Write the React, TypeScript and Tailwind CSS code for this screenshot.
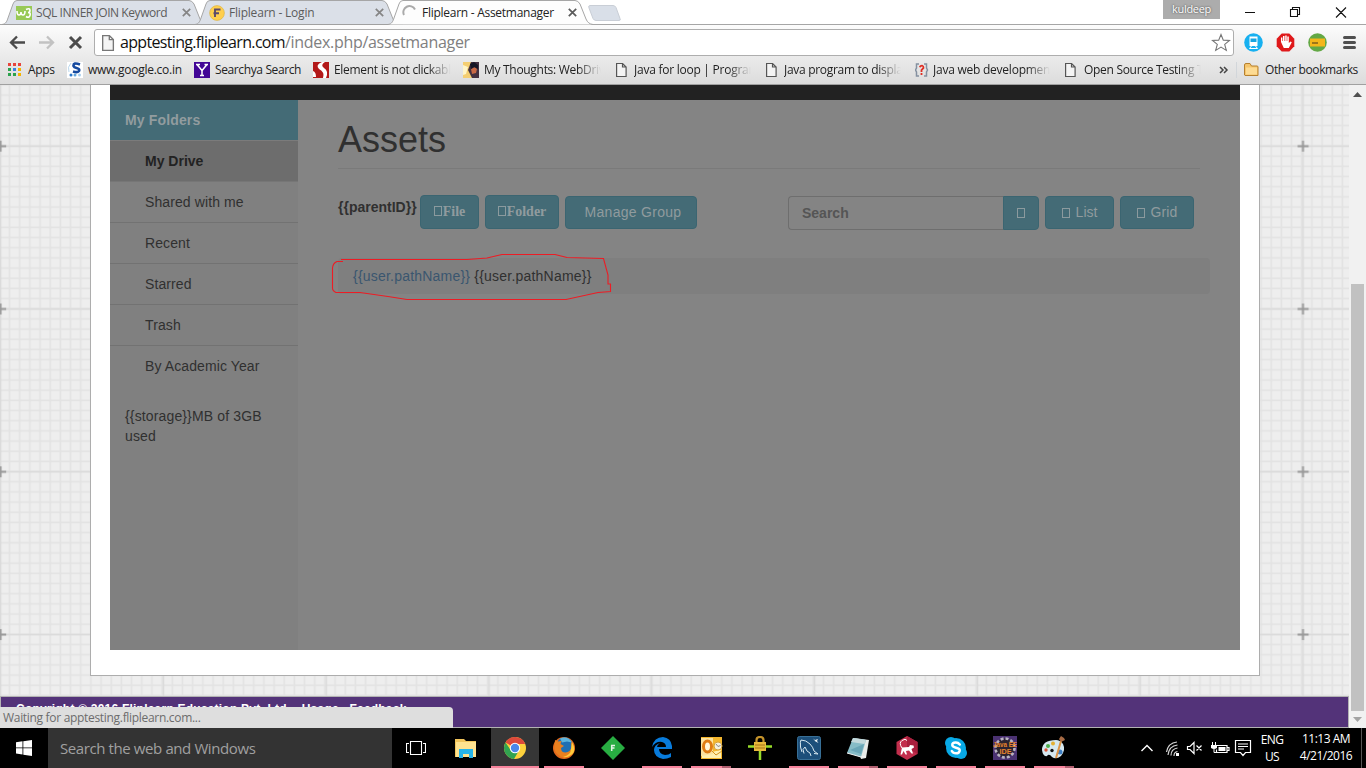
import type { ReactNode } from "react";

const segoe = "font-['Open_Sans','Noto_Sans',sans-serif]";

function PageIcon({ className = "" }: { className?: string }) {
  return (
    <svg width="16" height="16" viewBox="0 0 16 16" className={className}>
      <path d="M.6 1.5h6l3.500 3.500v9.500H.6z M6.500 1.500v3.500h3.500" fill="#f4f4f4" stroke="currentColor" strokeWidth="1.2" />
    </svg>
  );
}

function Tab({ icon, title, active = false }: { icon: ReactNode; title: ReactNode; active?: boolean }) {
  return (
    <div className={`relative w-[193px] h-[25px] shrink-0 ${active ? "z-20" : ""}`}>
      <svg className="absolute left-0 top-0" width="208" height="25" viewBox="0 0 208 25">
        <path
          d="M0 24.5C4 24 5 21 6 18L11 4Q12 .5 15 .5H187Q190 .5 192 4L198 19Q200 24 205 24.5"
          fill={active ? "#fdfdfd" : "#dbe0e8"}
          stroke="#a6a6a6"
        />
        {!active && <path d="M0 24.5H208" stroke="#a0a0a0" />}
      </svg>
      <div className="relative flex items-center h-[25px] pl-[14px]">
        <span className="w-[20px] shrink-0">{icon}</span>
        {title}
        <svg width="9" height="9" viewBox="0 0 9 9" className="absolute left-[180px] top-[8px]">
          <path d="M.8.8l7.4 7.4M8.2.8L.8 8.2" stroke={active ? "#5a5a5a" : "#858585"} strokeWidth="1.7" />
        </svg>
      </div>
    </div>
  );
}

function Bookmark({ icon, width, children }: { icon: ReactNode; width: string; children: ReactNode }) {
  return (
    <div className={`flex items-center shrink-0 h-full ${width}`}>
      {icon}
      {children}
    </div>
  );
}

function Fade({ children, className }: { children: ReactNode; className: string }) {
  return (
    <span
      className={`block w-[117px] overflow-hidden whitespace-nowrap [mask-image:linear-gradient(to_right,black_80%,transparent)] ${className}`}
    >
      {children}
    </span>
  );
}

function Browser() {
  return (
    <div className={`h-[85px] shrink-0 bg-white text-[12px] text-[#222] ${segoe}`}>
      <div className="relative flex h-[25px] pl-[2px]">
        <div className="absolute left-0 right-0 bottom-0 h-px bg-[#a6a6a6]" />
        <Tab
          icon={
            <svg width="16" height="14" viewBox="0 0 16 14">
              <path d="M0 0h16v14H0z" fill="#98c956" />
              <path d="M1 5q0 4 2 4t2-3q0 3 2 3t2-4M10 3.5q4-2 4 1 0 2-2 2 3 0 2 3t-4 1" fill="none" stroke="#fff" strokeWidth="1.6" />
            </svg>
          }
          title={<span className="text-[#5c5c5c] whitespace-nowrap tracking-[-0.44px]">SQL INNER JOIN Keyword</span>}
        />
        <Tab
          icon={
            <svg width="16" height="16" viewBox="0 0 16 16">
              <circle cx="8" cy="8" r="7.4" fill="#ffcf4d" stroke="#d9b040" strokeWidth=".6" />
              <path d="M6 12V4.5h5.500M4.500 8.300h5.500" fill="none" stroke="#5c4a6b" strokeWidth="1.900" />
            </svg>
          }
          title={<span className="text-[#5c5c5c] whitespace-nowrap tracking-[-0.2px]">Fliplearn - Login</span>}
        />
        <Tab
          active
          icon={
            <svg width="16" height="16" viewBox="0 0 16 16">
              <path d="M2 10A6 6 0 0 1 13 4.500" fill="none" stroke="#aaa" strokeWidth="2" />
            </svg>
          }
          title={<span className="text-[#222] whitespace-nowrap tracking-[-0.27px]">Fliplearn - Assetmanager</span>}
        />
        <svg width="34" height="17" viewBox="0 0 34 17" className="ml-[6px] mt-[5px]">
          <path d="M3 .5h23q2 0 3 2l4 11q1 2-1 2H9q-2 0-3-2L2 3Q1 .5 3 .5z" fill="#d9dfe8" stroke="#c9ced6" />
        </svg>
        <div className="ml-auto flex">
          <div className="w-[57px] h-[19px] bg-[#acacac] text-white text-[11px] leading-[18px] text-center tracking-[-0.3px] [text-shadow:0_0_2px_#333]">kuldeep</div>
          <svg width="146" height="24" viewBox="0 0 146 24">
            <path d="M25 12.500h10M70.500 9.500h7v7h-7zM72.500 9v-1.500h7v7H78M116 7.500l10 10m0-10l-10 10" fill="none" stroke="#111" strokeWidth="1.100" />
          </svg>
        </div>
      </div>
      <div className="h-[60px] bg-linear-to-b from-[#fcfcfc] to-[#dcdcdc] border-b border-[#a0a0a0]">
        <div className="h-[32px] pt-[4px] flex">
          <svg width="94" height="28" viewBox="0 0 94 28" className="shrink-0">
            <path d="M25 13.500H11.500M17 7.500l-6 6 6 6" fill="none" stroke="#4b4b4b" strokeWidth="2.300" />
            <path d="M39 13.500H52.500M47 7.500l6 6-6 6" fill="none" stroke="#c2c2c2" strokeWidth="2.300" />
            <path d="M70 8l11 11M81 8L70 19" stroke="#4b4b4b" strokeWidth="3" />
          </svg>
          <div className="w-[1140px] h-[27px] shrink-0 rounded-[3px] border border-[#aeaeae] bg-white flex items-center pl-[7px]">
            <PageIcon className="text-[#777] w-[18px] h-[18px] shrink-0" />
            <span className="text-[16px] leading-[22px] text-[#111] tracking-[-0.67px] -mt-px">
              apptesting.fliplearn.com<span className="text-[#808080] tracking-[-0.3px]">/index.php/assetmanager</span>
            </span>
            <svg width="20" height="20" viewBox="0 0 20 20" className="ml-auto mr-[2px]">
              <path d="M10 1.500l2.300 5.600 6.200.4-4.800 3.900 1.600 6-5.300-3.300-5.300 3.300 1.600-6L1.500 7.500l6.200-.4z" fill="#fff" stroke="#777" strokeWidth="1.100" />
            </svg>
          </div>
          <svg width="132" height="28" viewBox="48 0 132 28" className="shrink-0">
            <circle cx="67.500" cy="13.500" r="9.300" fill="#17b0f0" />
            <path d="M63.500 7.500h8v9.500h-8z" fill="#fff" />
            <path d="M64.500 9.500h6v3.500h-6z" fill="#17a5e0" />
            <path d="M65.500 17l-2 2.500h8l-2-2.500" fill="none" stroke="#fff" />
            <path d="M95.700 4.500h7.600l5 5.200v7.600l-5 5.200h-7.600l-5-5.200V9.700z" fill="#df191b" />
            <path d="M95 13V8.500h1.400V12h.6V7h1.500v5h.7V6.500h1.500V12h.6V7.500h1.500V14l1.700-1.500 1.300.8-3 5.700h-5z" fill="#fff" />
            <circle cx="131.500" cy="13.500" r="9.300" fill="#63a845" />
            <path d="M124 9.500h15v8h-15z" fill="#f3b61b" />
            <path d="M126 14h6" stroke="#80601a" strokeWidth="1.500" />
            <path d="M158.500 8.500h10M158.500 13.500h10M158.500 18.500h10" stroke="#505050" strokeWidth="3" strokeLinecap="round" />
          </svg>
        </div>
        <div className="h-[26px] flex items-center pl-[8px]">
          <Bookmark
            width="w-[59px] tracking-[-0.3px]"
            icon={
              <svg width="20" height="14" viewBox="0 0 20 14" className="shrink-0">
                <path d="M0 0h3v3H0zM5 0h3v3H5zM10 0h3v3h-3z" fill="#e8453c" />
                <path d="M0 5h3v3H0zM0 10h3v3H0z" fill="#2ba24c" />
                <path d="M5 5h3v3H5z" fill="#3b82e0" />
                <path d="M5 10h3v3H5z" fill="#2ba24c" />
                <path d="M10 5h3v3h-3zM10 10h3v3h-3z" fill="#f5b400" />
              </svg>
            }
          >
            Apps
          </Bookmark>
          <Bookmark
            width="w-[127px] tracking-[-0.26px]"
            icon={
              <svg width="21" height="16" viewBox="0 0 21 16" className="shrink-0">
                <path d="M0 0h16v16H0z" fill="#fff" />
                <path d="M13 2.500Q6 0 6.500 4q.5 1.500 3 2 3.500.8 2.500 3-1.500 2-6 .5" fill="none" stroke="#164a9f" strokeWidth="2.600" />
                <circle cx="4" cy="13" r="1.500" fill="#2a78cc" /><circle cx="8" cy="13" r="1.500" fill="#64a6dc" /><circle cx="12.500" cy="13" r="1.500" fill="#a9cfec" />
                <path d="M4 1Q0 5 2 10" fill="none" stroke="#b8d6ec" />
              </svg>
            }
          >
            www.google.co.in
          </Bookmark>
          <Bookmark
            width="w-[119px] tracking-[-0.38px]"
            icon={
              <svg width="21" height="16" viewBox="0 0 21 16" className="shrink-0">
                <path d="M0 0h16v16H0z" fill="#420696" />
                <path d="M3 2.500l5 6 5-6M8 8v6M2 2.500h4M10.500 2.500H14M6 13.500h4" fill="none" stroke="#fff" strokeWidth="1.500" />
              </svg>
            }
          >
            Searchya Search
          </Bookmark>
          <Bookmark
            width="w-[150px]"
            icon={
              <svg width="21" height="16" viewBox="0 0 21 16" className="shrink-0">
                <path d="M0 0h16v16H0z" fill="#b31919" />
                <path d="M9 0Q2 3 6 7q6 3 4 9h3Q16 9 11 6 7 3 12 0zM0 9q3 1 3 6H0z" fill="#fff" />
              </svg>
            }
          >
            <Fade className="tracking-[-0.3px]">Element is not clickable</Fade>
          </Bookmark>
          <Bookmark
            width="w-[153px]"
            icon={
              <svg width="21" height="16" viewBox="0 0 21 16" className="shrink-0">
                <path d="M0 0h16v16H0z" fill="#433040" />
                <path d="M0 0h8L5 8l4 8H0z" fill="#f4ce72" />
                <path d="M0 3l5 2-2 7-3 1z" fill="#fff5c9" />
                <path d="M8 7l4-2 2 2-1 4-4 1z" fill="#c96845" />
                <path d="M7 2l4-2 4 3v4l-4-2-3 2z" fill="#151626" />
              </svg>
            }
          >
            <Fade className="tracking-[-0.3px]">My Thoughts: WebDriver</Fade>
          </Bookmark>
          <Bookmark width="w-[150px]" icon={<PageIcon className="text-[#555] mr-[2px] shrink-0" />}>
            <Fade className="tracking-[-0.25px]">Java for loop | Programs</Fade>
          </Bookmark>
          <Bookmark width="w-[149px]" icon={<PageIcon className="text-[#555] mr-[2px] shrink-0" />}>
            <Fade className="tracking-[-0.3px]">Java program to display</Fade>
          </Bookmark>
          <Bookmark
            width="w-[150px]"
            icon={
              <svg width="18" height="16" viewBox="0 0 18 16" className="shrink-0">
                <path d="M4 2H1.500v4L.5 8l1 2v4H4M9 2h2.500v4l1 2-1 2v4H9" fill="none" stroke="#8490a0" strokeWidth="1.500" />
                <path d="M4.500 5Q8.500 2 8.500 6L6.500 8v2M6.500 11v2" fill="none" stroke="#df2e24" strokeWidth="1.800" />
              </svg>
            }
          >
            <Fade className="tracking-[-0.24px]">Java web development</Fade>
          </Bookmark>
          <Bookmark width="w-[154px]" icon={<PageIcon className="text-[#555] mr-[3px] shrink-0" />}>
            <Fade className="tracking-[-0.3px]">Open Source Testing Tools</Fade>
          </Bookmark>
          <svg width="25" height="16" viewBox="0 0 25 16" className="shrink-0">
            <path d="M1 5l3 3-3 3M5 5l3 3-3 3" fill="none" stroke="#444" strokeWidth="1.500" />
            <path d="M17.500 0v16" stroke="#d2d6da" />
          </svg>
          <svg width="21" height="16" viewBox="0 0 21 16" className="shrink-0">
            <path d="M.5 13V3q0-1.500 1.500-1.500h4L7.500 4H13q1 0 1 1v8.500H1z" fill="#f5c56c" stroke="#b6802e" />
            <path d="M2 5.500h11v7H2z" fill="#fddb93" />
          </svg>
          <span className="whitespace-nowrap tracking-[-0.37px]">Other bookmarks</span>
        </div>
      </div>
    </div>
  );
}

function Backdrop() {
  return (
    <svg className="absolute inset-0 w-full h-full" aria-hidden="true">
      <defs>
        <pattern id="cells" width="10.175" height="10.175" patternUnits="userSpaceOnUse" x="4.500" y="56">
          <path d="M0 5h10.175M5 0v10.175" stroke="#e3e3e3" strokeWidth="1.700" />
        </pattern>
        <pattern id="major" width="162.800" height="162.800" patternUnits="userSpaceOnUse" x="-80.800" y="-20.200">
          <path d="M0 81.400h162.800M81.400 0v162.800" stroke="#dadada" strokeWidth="1.600" />
          <path d="M76 81.400h11M81.400 76v11" stroke="#999" strokeWidth="2" />
        </pattern>
      </defs>
      <path d="M0 0h1349v643H0z" fill="#eee" />
      <path d="M0 0h1349v643H0z" fill="url(#cells)" />
      <path d="M0 0h1349v643H0z" fill="url(#major)" />
    </svg>
  );
}

function Missing() {
  return <span className="inline-block w-[8px] h-[10px] border border-[#8b9a9e]" />;
}

function Button({ className, children }: { className: string; children: ReactNode }) {
  return (
    <button className={`flex items-center justify-center shrink-0 bg-[#446b76] border border-[#3b6571] text-[#909b9e] ${className}`}>
      {children}
    </button>
  );
}

const folders = ["Shared with me", "Recent", "Starred", "Trash", "By Academic Year"];

function Sidebar() {
  return (
    <aside className="w-[188px] shrink-0 bg-[#808080] text-[#303030]">
      <div className="h-[40px] pl-[15px] bg-[#446b76] text-[#929c9f] font-bold leading-[40px] tracking-[0.15px]">My Folders</div>
      <div className="h-[42px] pl-[35px] bg-[#6d6d6d] border-y border-t-[#7b7b7b] border-b-[#767676] text-[#222] font-bold leading-[40px]">My Drive</div>
      {folders.map((name, i) => (
        <div key={name} className={`pl-[35px] leading-[40px] tracking-[0.1px] ${i < folders.length - 1 ? "h-[41px] border-b border-[#727272]" : "h-[40px]"}`}>
          {name}
        </div>
      ))}
      <p className="mt-[20px] pl-[15px] w-[170px] leading-[20px] tracking-[0.14px]">{"{{storage}}MB of 3GB used"}</p>
    </aside>
  );
}

function Assets() {
  return (
    <main className="relative flex-1 pl-[40px] pr-[40px] bg-[#848484] text-[#303030]">
      <h1 className="h-[69px] border-b border-[#7a7a7a] pt-[20px] text-[36px] leading-[40px]">Assets</h1>
      <div className="flex items-start mt-[26px] pr-[6px] h-[63px]">
        <b className="w-[82px] shrink-0 leading-[20px] pt-[2px]">{"{{parentID}}"}</b>
        <Button className="w-[59px] h-[34px] rounded-[4px] font-['Liberation_Serif',serif] font-bold gap-[1px] pb-[2px]"><Missing />File</Button>
        <Button className="w-[74px] h-[34px] rounded-[4px] ml-[6px] font-['Liberation_Serif',serif] font-bold gap-[1px] pb-[2px]"><Missing />Folder</Button>
        <Button className="w-[132px] h-[33px] rounded-[4px] ml-[6px] mt-px pl-[4px] tracking-[0.28px]">Manage Group</Button>
        <div className="ml-auto mt-px w-[215px] h-[34px] shrink-0 rounded-l-[4px] border border-r-0 border-[#6e6e6e] pl-[13px] leading-[33px] font-bold text-[#555]">Search</div>
        <Button className="w-[36px] h-[34px] mt-px rounded-r-[4px]"><Missing /></Button>
        <Button className="w-[69px] h-[33px] mt-px rounded-[4px] ml-[6px] gap-[6px]"><Missing />List</Button>
        <Button className="w-[74px] h-[33px] mt-px rounded-[4px] ml-[6px] gap-[6px] tracking-[0.1px]"><Missing />Grid</Button>
      </div>
      <div className="h-[36px] -mr-[10px] rounded-[4px] bg-[#7f7f7f] pl-[15px] leading-[36px] tracking-[0.21px]">
        <span className="text-[#3a566f]">{"{{user.pathName}}"}</span> {"{{user.pathName}}"}
      </div>
      <svg className="absolute left-[32px] top-[150px]" width="284" height="54" viewBox="330 250 284 54">
        <path
          d="M341 259.500H467L487 258 502 254.500H555L567 257.500 603.500 258.500 608 275V284H610.500V291.500L598 292.500 566 299.500H407L388 296.500 360 292.500H336Q332.500 291 332.500 288V268Q333 263 337 261.500H343"
          fill="none"
          stroke="#ed1c24"
          strokeWidth="1.100"
        />
      </svg>
    </main>
  );
}

function Page() {
  return (
    <div className="relative flex h-[643px] shrink-0 overflow-hidden font-['Liberation_Sans',sans-serif] text-[14px]">
      <Backdrop />
      <div className="relative flex flex-col flex-1">
        <div className="w-[1170px] h-[591px] ml-[90px] shrink-0 bg-white border border-t-0 border-[#adadad] px-[19px]">
          <div className="h-[15px] bg-[#222]" />
          <div className="h-[550px] flex">
            <Sidebar />
            <Assets />
          </div>
        </div>
        <footer className="mt-[20px] h-[32px] shrink-0 bg-[#533379] border border-[#b3b3b3] text-white font-bold text-[12px] leading-[16px] pl-[15px] pt-[4px] tracking-[0.22px] whitespace-nowrap">
          Copyright © 2016 Fliplearn Education Pvt. Ltd. - Usage . Feedback
        </footer>
        <div className={`absolute left-0 bottom-0 w-[453px] h-[21px] rounded-tr-[4px] bg-[#dedede] pl-[3px] text-[12px] leading-[22px] text-[#6c6c6c] tracking-[-0.31px] ${segoe}`}>
          Waiting for apptesting.fliplearn.com...
        </div>
      </div>
      <div className="relative w-[17px] shrink-0 bg-[#f1f1f1] flex flex-col items-center">
        <svg width="9" height="5" viewBox="0 0 9 5" className="mt-[7px] shrink-0"><path d="M0 5l4.500-5L9 5z" fill="#505050" /></svg>
        <div className="mt-[187px] h-[427px] w-[13px] bg-[#c1c1c1] shrink-0" />
        <svg width="9" height="5" viewBox="0 0 9 5" className="mt-[6px] shrink-0"><path d="M0 0l4.500 5L9 0z" fill="#a3a3a3" /></svg>
      </div>
    </div>
  );
}

function Explorer() {
  return (
    <svg width="24" height="24" viewBox="0 0 24 24">
      <path d="M1 3h9l2 2h10v16H1z" fill="#f2c55c" /><path d="M2 6h20v15H2z" fill="#ffe390" />
      <path d="M5 13h14v9h-4v-4H9v4H5z" fill="#27b4e8" />
    </svg>
  );
}

function Chrome() {
  return (
    <svg width="24" height="24" viewBox="0 0 24 24">
      <circle cx="12" cy="12" r="11" fill="#fdd13c" />
      <path d="M12 12L2.500 6.500A11 11 0 0 1 22.200 8H12z" fill="#dc493b" />
      <path d="M2.500 6.500A11 11 0 0 0 11 23l5-8.500-4 2-4-2z" fill="#31a350" />
      <circle cx="12" cy="12" r="5.200" fill="#fff" /><circle cx="12" cy="12" r="4.200" fill="#4b87e8" />
    </svg>
  );
}

function Firefox() {
  return (
    <svg width="24" height="24" viewBox="0 0 24 24">
      <circle cx="12" cy="12" r="11" fill="#e46a1c" />
      <circle cx="12.500" cy="9.500" r="8" fill="#1f6fb4" />
      <path d="M8 2.500q8-3 12 4l-5-1-5 1z" fill="#5cb4dd" />
      <path d="M3 4l3 1.500 3.500-.5-1 3 3.500 2-3 2q0 4.500 4.500 4.500 5-.5 6-5.500l-.5-5 2.500 2.500q2 7-2 10.500-5 4-11 1.500-7-4-6-11z" fill="#e9801f" />
      <path d="M20 6q5 9-1 13-4 3-8 2 8-2 8-8z" fill="#ffca3b" />
    </svg>
  );
}

function Diamond() {
  return (
    <svg width="24" height="24" viewBox="0 0 24 24">
      <path d="M12 0l12 12-12 12L0 12z" fill="#28ad42" /><path d="M10.700 15V9.500H14M11 12h2.500" fill="none" stroke="#e5f4e7" strokeWidth="1.500" />
    </svg>
  );
}

function Edge() {
  return (
    <svg width="24" height="24" viewBox="0 0 24 24">
      <path d="M2 11Q4 1 13 1q8 1 9 9v3H9q0 5 6 6 4 0 6-2v4q-4 2-8 2-9-2-9-9 0-5 6-7-3 2-3 4h9q0-4-4-5-6-1-10 5z" fill="#087bdc" />
    </svg>
  );
}

function Outlook() {
  return (
    <svg width="24" height="24" viewBox="0 0 24 24">
      <path d="M2 1h21v22H2z" fill="#f4b72f" /><path d="M3 18l19-4v8H3z" fill="#fff0b0" />
      <path d="M2 2h12v16L2 20z" fill="#fbe3a0" />
      <ellipse cx="8.500" cy="10.500" rx="4" ry="5.500" fill="#fff6da" stroke="#df7c13" strokeWidth="3" />
      <circle cx="19" cy="10" r="4" fill="#f6f0dc" stroke="#d7a33c" /><path d="M17 8l2 2.500 2.500-1" fill="none" stroke="#888" />
      <path d="M13 15l4 4 6-4" fill="none" stroke="#d49420" />
    </svg>
  );
}

function Lock() {
  return (
    <svg width="24" height="24" viewBox="0 0 24 24">
      <path d="M0 10.500h24M12 14v10" stroke="#98dc2a" strokeWidth="2.500" />
      <path d="M8.500 7V4q0-3 3.500-3t3.500 3v3" fill="none" stroke="#c4922a" strokeWidth="2.200" />
      <path d="M6 6h12v9H6z" fill="#e7b83b" /><path d="M7 9h10M7 12h10" stroke="#a87518" />
    </svg>
  );
}

function Dolphin() {
  return (
    <svg width="24" height="24" viewBox="0 0 24 24">
      <rect x=".5" y=".5" width="23" height="23" rx="2" fill="#1d4f7a" stroke="#386f96" />
      <path d="M5 16l-1.500-5Q3 5 4 4q5 0 9 4 3 3 4 7l4 3-4-.5M14 20l-1-3-3-2-2-4-2 2.500 1 4" fill="none" stroke="#d8e8f0" strokeWidth="1" />
      <path d="M16 2.500l2 1.500 3-1-1 2 1.500 2-3-1.500z" fill="#e7edf0" />
    </svg>
  );
}

function Notepad() {
  return (
    <svg width="24" height="24" viewBox="0 0 24 24">
      <path d="M8 2l15 2-3 18-5 1z" fill="#e8ebe9" /><path d="M7 2l13 2-5 17L1 17z" fill="#86bcc7" />
      <path d="M7 2l13 2-1.500 4L5 6z" fill="#c4d9dc" /><path d="M1 17l14 4 5-1" stroke="#f4f4f4" fill="none" /><path d="M4 14L18 8l-3 10z" fill="#6aa6b7" />
    </svg>
  );
}

function Monkey() {
  return (
    <svg width="24" height="24" viewBox="0 0 24 24">
      <path d="M12 0l10.500 6v12L12 24 1.500 18V6z" fill="#c22e4c" /><path d="M12 0l10.500 6v12L12 12z" fill="#a91f3d" />
      <path d="M7 12Q3.500 7 7 4.500t5 0" fill="none" stroke="#fff" strokeWidth="1" />
      <path d="M7 11.500l7-.5 1-2 3.500.5.5 2-2.500 1.500 1.500 4.500h-1.500L14 14.500l-3 .5 1 3.500h-1.500L8.500 15 7 18.500H5.500z" fill="#fff" />
    </svg>
  );
}

function Skype() {
  return (
    <svg width="24" height="24" viewBox="0 0 24 24">
      <circle cx="12" cy="12" r="10" fill="#08a9e6" /><circle cx="7" cy="7" r="6" fill="#08a9e6" /><circle cx="17" cy="17" r="6" fill="#08a9e6" />
      <path d="M15.800 8.500Q14 6.300 11.500 6.500q-3.500.3-3.200 2.700.2 1.800 3.700 2.500 4 .8 3.700 3-.5 2.600-3.700 2.600-3 0-4.200-2.300" fill="none" stroke="#fff" strokeWidth="2.500" strokeLinecap="round" />
    </svg>
  );
}

function JavaEE() {
  return (
    <svg width="24" height="24" viewBox="0 0 24 24">
      <path d="M0 0h24v24H0z" fill="#4b3272" />
      <circle cx="12" cy="12" r="9.500" fill="#2c2430" stroke="#b9b3c0" strokeWidth="2.600" strokeDasharray="3 2" />
      <text x="0" y="11" fontSize="8" fontWeight="bold" fill="#e9852c" fontFamily="Liberation Sans" textLength="24" lengthAdjust="spacingAndGlyphs">Java EE</text>
      <text x="6.500" y="18" fontSize="8" fontWeight="bold" fill="#e9852c" fontFamily="Liberation Sans" textLength="12" lengthAdjust="spacingAndGlyphs">IDE</text>
    </svg>
  );
}

function Paint() {
  return (
    <svg width="24" height="24" viewBox="0 0 24 24">
      <path d="M14 4Q0 4 0 14q1 7 5 6 2-3 5 1 4 3 9-1 5-6 2-12-3-4-7-4z" fill="#d6e8f0" />
      <circle cx="6" cy="10" r="2" fill="#4daf4b" /><circle cx="11" cy="7.500" r="2" fill="#e4b032" /><circle cx="4" cy="14" r="1.700" fill="#d95334" /><circle cx="18" cy="16" r="2.500" fill="#3e7fc4" /><circle cx="10" cy="14.500" r="1.700" fill="#111" />
      <path d="M14 22l5-17" stroke="#dd9447" strokeWidth="2" /><path d="M17 3l2-3 3 2 1 2-4 2z" fill="#a76b45" />
    </svg>
  );
}

const apps = [
  { icon: <Explorer />, open: false },
  { icon: <Chrome />, open: true },
  { icon: <Firefox />, open: true },
  { icon: <Diamond />, open: false },
  { icon: <Edge />, open: true },
  { icon: <Outlook />, open: true, stacked: true },
  { icon: <Lock />, open: false },
  { icon: <Dolphin />, open: true },
  { icon: <Notepad />, open: true, stacked: true },
  { icon: <Monkey />, open: true },
  { icon: <Skype />, open: true },
  { icon: <JavaEE />, open: true },
  { icon: <Paint />, open: true, stacked: true },
];

function Taskbar() {
  return (
    <div className={`flex h-[40px] shrink-0 bg-black text-white ${segoe}`}>
      <div className="w-[48px] shrink-0 flex items-center justify-center">
        <svg width="16" height="16" viewBox="0 0 16 16">
          <path d="M0 2.300L6.500 1.300V7.500H0zM7.300 1.200L16 0v7.500H7.300zM0 8.300h6.500v6.200L0 13.600zM7.300 8.300H16V16l-8.700-1.300z" fill="#fff" />
        </svg>
      </div>
      <div className="w-[344px] shrink-0 bg-[#333] pl-[12px] text-[15px] leading-[40px] text-[#a0a0a0] tracking-[-0.4px]">Search the web and Windows</div>
      <div className="w-[50px] shrink-0 flex items-center pl-[14px]">
        <svg width="20" height="16" viewBox="0 0 20 16">
          <path d="M4.500 1.500h11v13h-11zM3 3.500H.5v9H3M17 3.500h2.500v9H17" fill="none" stroke="#fff" strokeWidth="1.100" />
        </svg>
      </div>
      {apps.map((app, i) => (
        <div key={i} className="w-[49px] shrink-0">
          <div className={`w-[48px] h-full flex flex-col items-center ${i === 1 ? "bg-[#363636]" : ""}`}>
            <div className="h-[38px] flex items-center pt-[2px]">{app.icon}</div>
            {app.open && (
              <div className={`h-[2px] flex justify-end bg-[#f7839c] ${i === 1 ? "w-[48px]" : "w-[40px]"}`}>
                {app.stacked && <div className="w-[9px] h-full bg-[#b05f70]" />}
              </div>
            )}
          </div>
        </div>
      ))}
      <div className="flex items-center ml-auto">
        <svg width="116" height="24" viewBox="0 0 116 24" className="shrink-0">
          <path d="M1.500 15l5.500-5.500L12.500 15" fill="none" stroke="#fff" strokeWidth="1.400" />
          <path d="M28 18Q29 9 37.500 8M31 18.500Q31 12 37.500 11M34 19Q34 15 37.500 14.500M26.500 15Q28 6 37 5" fill="none" stroke="#d5d5d5" strokeWidth="1.200" transform="translate(0 1)" />
          <path d="M36 17h3v3h-3z" fill="#fff" />
          <path d="M47.500 10.500h2.500l4-4v11l-4-4h-2.500zM56.500 9.500l5 5m0-5l-5 5" fill="none" stroke="#fff" strokeWidth="1.200" />
          <path d="M77 9.500h10v7h-10.500v-3M87.500 11.500h1.500v3H87.500" fill="none" stroke="#fff" strokeWidth="1.200" />
          <path d="M78.500 11h7v4h-7zM71 9h6v3q-3 2-6 0z" fill="#fff" /><path d="M72.500 6v3M75.500 6v3M74 13v3.500h3" fill="none" stroke="#fff" />
          <path d="M95.500 4.500h15v12h-5l-2.500 3-2.500-3h-5zM98 8h10M98 10.500h10M98 13h6" fill="none" stroke="#fff" strokeWidth="1.200" />
        </svg>
        <div className="w-[30px] text-center text-[12px] leading-[17px] tracking-[-0.6px] ml-px -mt-px">ENG<br />US</div>
        <div className="w-[60px] ml-[9px] -mt-[2px] text-center text-[12px] leading-[17px] tracking-[-0.5px] whitespace-nowrap">11:13 AM<br />4/21/2016</div>
        <div className="w-px h-[40px] bg-[#555] ml-[5px] mr-[4px]" />
      </div>
    </div>
  );
}

export default function App() {
  return (
    <div className="w-[1366px] h-[768px] flex flex-col overflow-hidden bg-white">
      <Browser />
      <Page />
      <Taskbar />
    </div>
  );
}
